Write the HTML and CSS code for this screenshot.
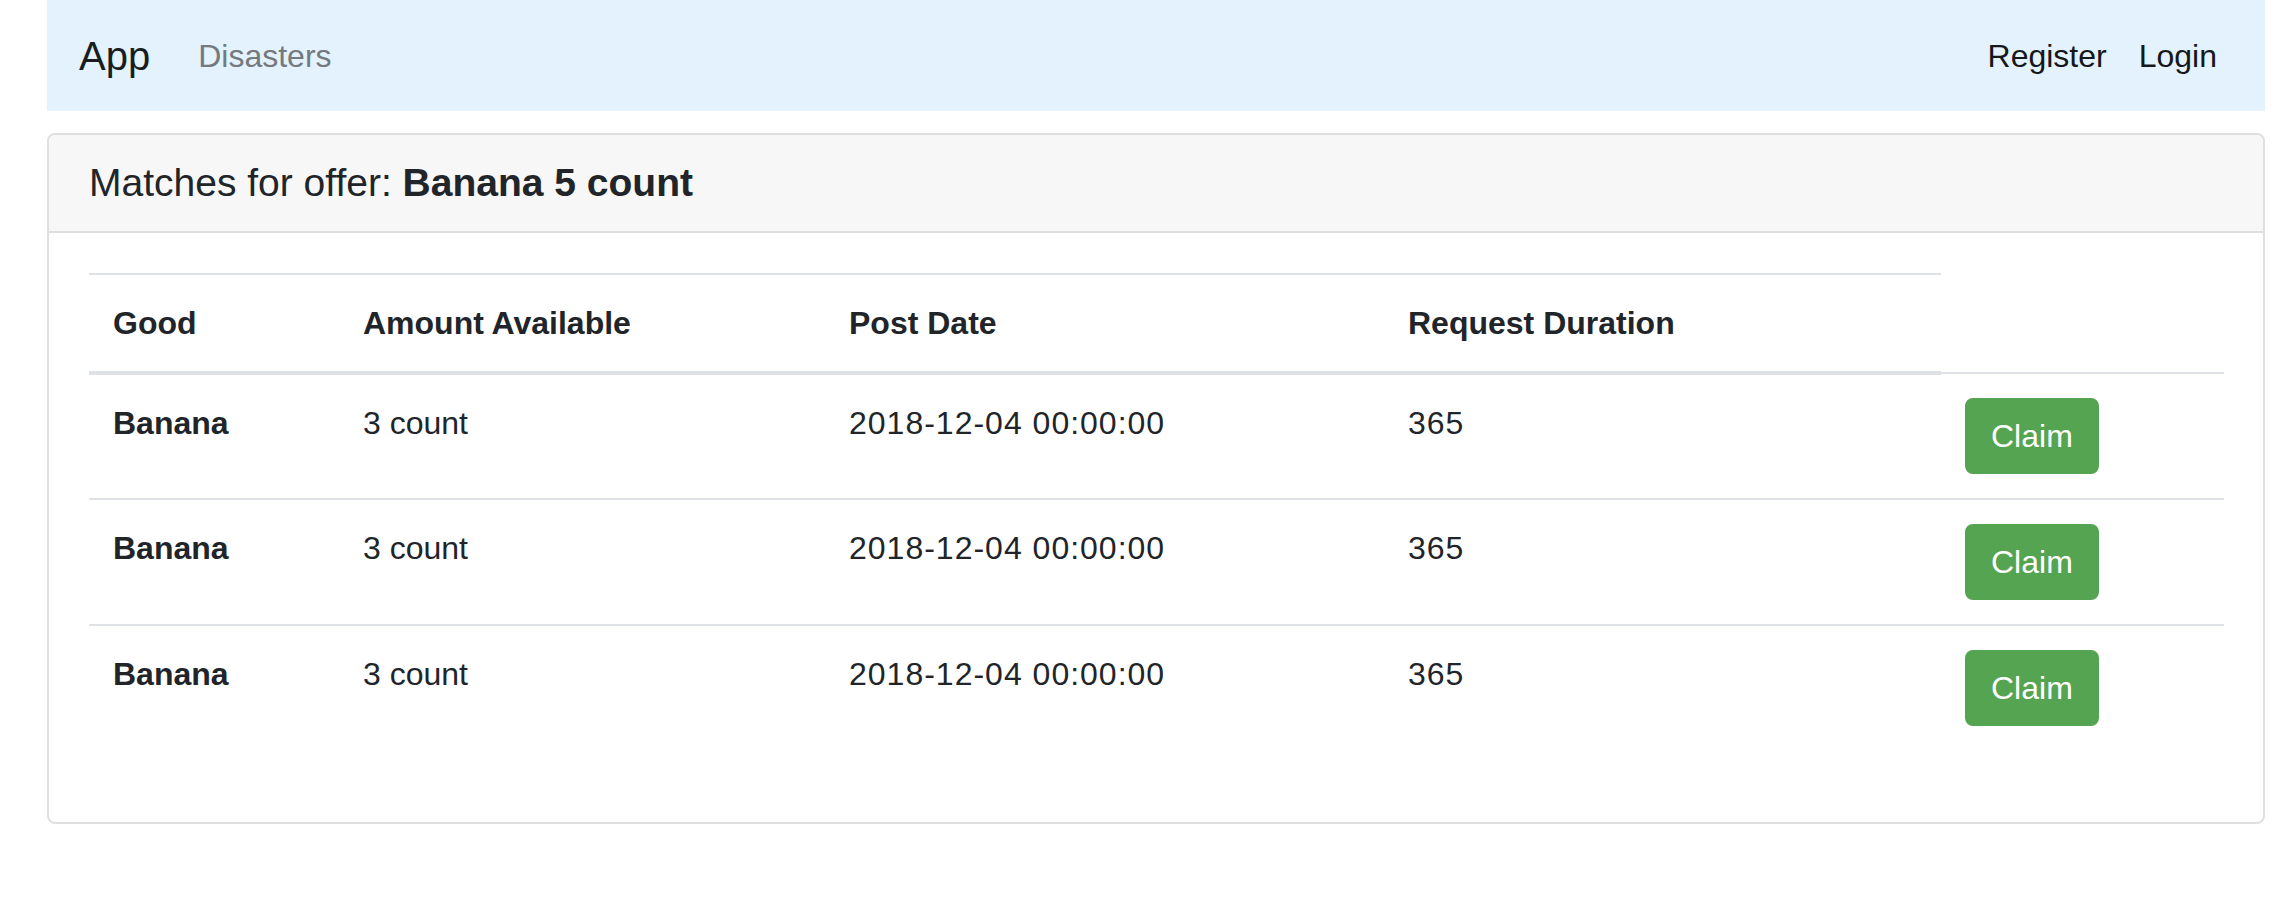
FILE: index.html
```html
<!DOCTYPE html>
<html lang="en">
<head>
<meta charset="utf-8">
<title>App</title>
<link rel="stylesheet" href="styles.css">
</head>
<body>
<div class="page">
  <nav class="navbar">
    <div class="nav-left">
      <a class="brand" href="#">App</a>
      <a class="nav-link muted" href="#">Disasters</a>
    </div>
    <div class="nav-right">
      <a class="nav-link" href="#">Register</a>
      <a class="nav-link" href="#">Login</a>
    </div>
  </nav>

  <div class="card">
    <div class="card-header">
      <h5 class="card-title">Matches for offer: <b>Banana 5 count</b></h5>
    </div>
    <div class="card-body">
      <table class="table">
        <colgroup>
          <col class="c-good">
          <col class="c-amount">
          <col class="c-date">
          <col class="c-duration">
          <col class="c-action">
        </colgroup>
        <thead>
          <tr>
            <th>Good</th>
            <th>Amount Available</th>
            <th>Post Date</th>
            <th>Request Duration</th>
          </tr>
        </thead>
        <tbody>
          <tr>
            <th>Banana</th>
            <td>3 count</td>
            <td class="num">2018-12-04 00:00:00</td>
            <td class="num">365</td>
            <td><button class="btn">Claim</button></td>
          </tr>
          <tr>
            <th>Banana</th>
            <td>3 count</td>
            <td class="num">2018-12-04 00:00:00</td>
            <td class="num">365</td>
            <td><button class="btn">Claim</button></td>
          </tr>
          <tr>
            <th>Banana</th>
            <td>3 count</td>
            <td class="num">2018-12-04 00:00:00</td>
            <td class="num">365</td>
            <td><button class="btn">Claim</button></td>
          </tr>
        </tbody>
      </table>
    </div>
  </div>
</div>
</body>
</html>
```

FILE: styles.css
```css
* {
  box-sizing: border-box;
}

html, body {
  margin: 0;
  padding: 0;
  background: #ffffff;
}

body {
  font-family: "Liberation Sans", Arial, sans-serif;
  font-size: 32px;
  line-height: 1.5;
  color: #212529;
}

.page {
  padding: 0 23px 0 47px;
}

a {
  text-decoration: none;
  color: inherit;
}

.navbar {
  display: flex;
  align-items: center;
  justify-content: space-between;
  height: 111px;
  padding: 0 32px;
  background: #e3f2fd;
}

.nav-left,
.nav-right {
  display: flex;
  align-items: center;
}

.brand {
  font-size: 40px;
  line-height: 60px;
  color: #1a1d20;
  margin-right: 32px;
}

.nav-link {
  padding: 0 16px;
  color: #15181b;
  line-height: 48px;
}

.nav-link.muted {
  color: #74797e;
}

.card {
  margin-top: 22px;
  border: 2px solid #dfdfdf;
  border-radius: 8px;
  overflow: hidden;
}

.card-header {
  background: #f7f7f7;
  border-bottom: 2px solid #dfdfdf;
  padding: 24px 40px;
}

.card-title {
  margin: 0;
  font-size: 39px;
  line-height: 48px;
  font-weight: 400;
}

.card-title b {
  font-weight: 700;
}

.card-body {
  padding: 40px;
}

.table {
  width: 100%;
  border-collapse: collapse;
  table-layout: fixed;
  margin-bottom: 32px;
}

.c-good { width: 250px; }
.c-amount { width: 486px; }
.c-date { width: 559px; }
.c-duration { width: 557px; }
.c-action { width: 283px; }

.table th,
.table td {
  padding: 24px;
  text-align: left;
  vertical-align: top;
  border-top: 2px solid #dee2e6;
  line-height: 48px;
  white-space: nowrap;
}

.table td.num {
  letter-spacing: 1px;
}

.table th {
  font-weight: 700;
}

.table thead th {
  vertical-align: bottom;
  border-bottom: 4px solid #dee2e6;
}

.btn {
  display: inline-block;
  font-family: "Liberation Sans", Arial, sans-serif;
  font-size: 32px;
  line-height: 48px;
  padding: 12px 24px;
  border: 2px solid #54a452;
  border-radius: 8px;
  background: #54a452;
  color: #ffffff;
  cursor: pointer;
}
```
